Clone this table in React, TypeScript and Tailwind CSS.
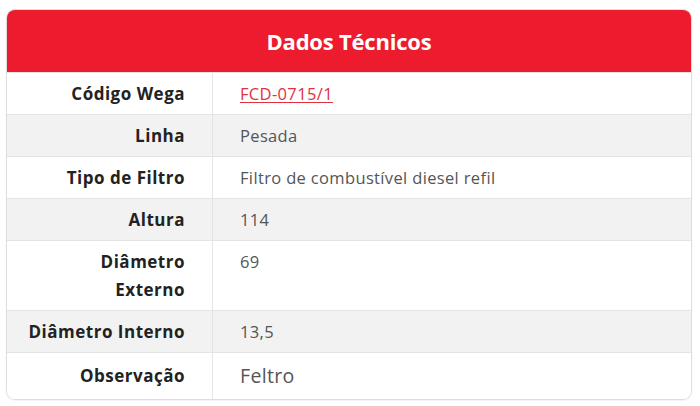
const rows: { label: React.ReactNode; value: React.ReactNode; big?: boolean }[] = [
  {
    label: "Código Wega",
    value: (
      <a href="#" className="text-[#e0313f] underline underline-offset-2 decoration-1">
        FCD-0715/1
      </a>
    ),
  },
  { label: "Linha", value: "Pesada" },
  { label: "Tipo de Filtro", value: "Filtro de combustível diesel refil" },
  { label: "Altura", value: "114" },
  {
    label: (
      <>
        Diâmetro
        <br />
        Externo
      </>
    ),
    value: "69",
  },
  { label: "Diâmetro Interno", value: "13,5" },
  { label: "Observação", value: "Feltro", big: true },
];

export default function App() {
  return (
    <div className="w-[700px] h-[406px] bg-white pt-[9px] px-[6px] font-['Open_Sans',sans-serif]">
      <div className="w-[686px] rounded-[9px] border border-[#dedede] overflow-hidden shadow-[0_1px_2px_rgba(0,0,0,0.06)]">
        {/* Header */}
        <div className="h-[62px] bg-[#ec1c2e] flex items-center justify-center">
          <h2 className="text-white text-[22px] font-bold tracking-[-0.2px]">Dados Técnicos</h2>
        </div>

        {/* Rows */}
        {rows.map((r, i) => (
          <div
            key={i}
            className={`grid grid-cols-[206px_1fr] border-t border-[#e4e4e4] ${
              i % 2 === 1 ? "bg-[#f2f2f2]" : "bg-white"
            }`}
          >
            <div
              className={`border-r border-[#e4e4e4] pl-4 pr-[27px] text-right font-bold text-[17px] tracking-[0.5px] text-[#222] leading-[28px] whitespace-nowrap ${
                r.big ? "py-[9px]" : "py-[6.5px]"
              }`}
            >
              {r.label}
            </div>
            <div
              className={`pl-[27px] pr-4 text-[#555] tracking-[0.35px] ${
                r.big ? "text-[19.5px] leading-[28px] py-[9px]" : "text-[16.5px] leading-[28px] py-[6.5px]"
              }`}
            >
              {r.value}
            </div>
          </div>
        ))}
      </div>
    </div>
  );
}
